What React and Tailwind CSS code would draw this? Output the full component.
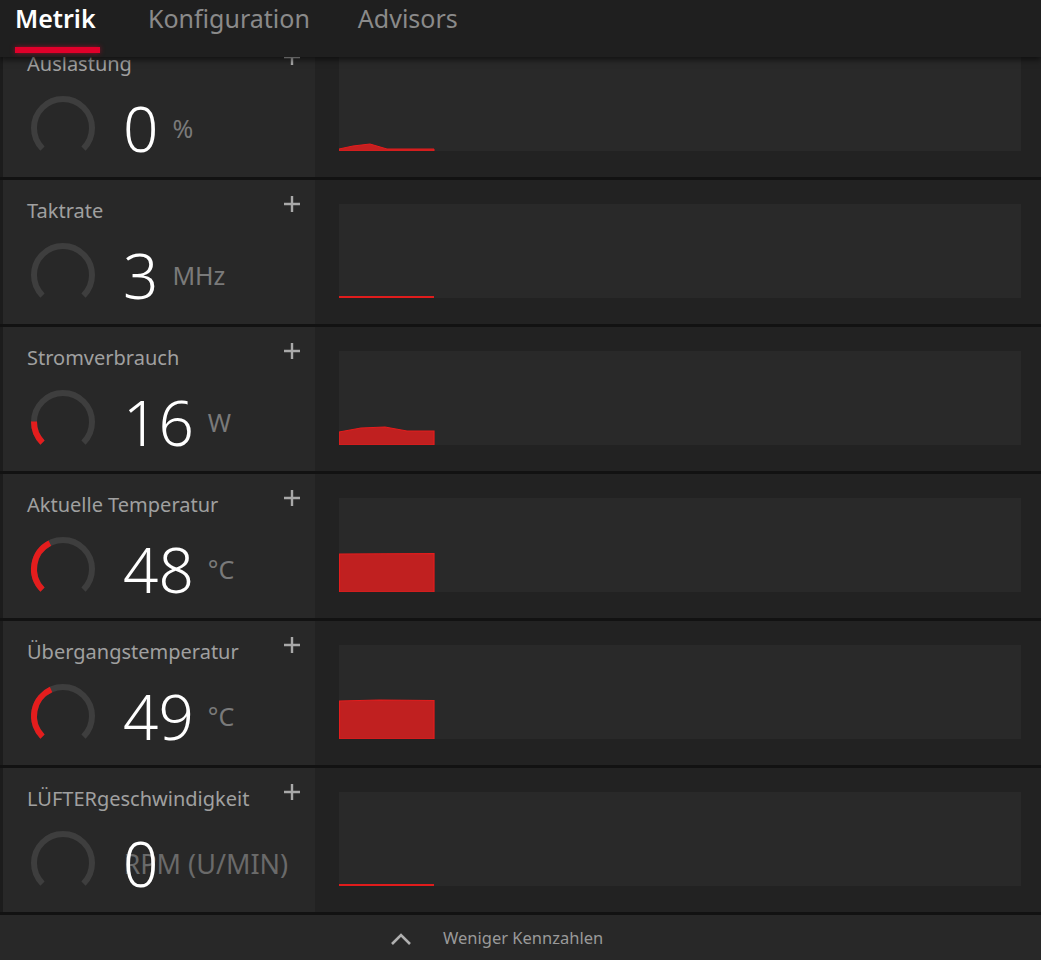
import React from "react";

const FONT = { fontFamily: '"Noto Sans", "Open Sans", sans-serif' };

// Gauge arc: 270° sweep starting bottom-left, going clockwise over the top
function arcPath(cx, cy, r, frac) {
  const start = (135 * Math.PI) / 180;
  const sweep = 270 * frac;
  const end = ((135 + sweep) * Math.PI) / 180;
  const x1 = cx + r * Math.cos(start);
  const y1 = cy + r * Math.sin(start);
  const x2 = cx + r * Math.cos(end);
  const y2 = cy + r * Math.sin(end);
  const large = sweep > 180 ? 1 : 0;
  return `M ${x1.toFixed(2)} ${y1.toFixed(2)} A ${r} ${r} 0 ${large} 1 ${x2.toFixed(2)} ${y2.toFixed(2)}`;
}

function Gauge({ value }) {
  return (
    <svg width="70" height="70" viewBox="0 0 70 70" className="shrink-0">
      <path d={arcPath(35, 35, 29, 1)} fill="none" stroke="#3e3e3e" strokeWidth="6" />
      {value > 0 && (
        <path d={arcPath(35, 35, 29, value)} fill="none" stroke="#e41d1d" strokeWidth="6" />
      )}
    </svg>
  );
}

function Plus() {
  return (
    <svg width="18" height="18" viewBox="0 0 18 18">
      <path d="M9 1v16M1 9h16" stroke="#a9a9a9" strokeWidth="2.4" />
    </svg>
  );
}

// Sparkline area, drawn only over the first ~95px of the history window
function Chart({ shape }) {
  return (
    <div className="h-[94px] w-[682px] bg-[#292929]">
      <svg width="682" height="94" viewBox="0 0 682 94">
        {shape}
      </svg>
    </div>
  );
}

const line = <path d="M0 93 L95 93" stroke="#e01c1c" strokeWidth="2" />;

const rows = [
  {
    label: "Auslastung",
    value: "0",
    unit: "%",
    gauge: 0,
    shape: (
      <path
        d="M0 93 L0 92 L14 89 L31 87 L48 92 L95 92 L95 94 L0 94 Z"
        fill="#c42020"
        stroke="#e41d1d"
        strokeWidth="1"
      />
    ),
  },
  { label: "Taktrate", value: "3", unit: "MHz", gauge: 0, shape: line },
  {
    label: "Stromverbrauch",
    value: "16",
    unit: "W",
    gauge: 0.17,
    shape: (
      <path
        d="M0 94 L0 81 L22 77 L46 76 L68 80 L95 80 L95 94 Z"
        fill="#c02020"
        stroke="#e41d1d"
        strokeWidth="1.2"
      />
    ),
  },
  {
    label: "Aktuelle Temperatur",
    value: "48",
    unit: "°C",
    gauge: 0.4,
    shape: (
      <path
        d="M0.5 94 L0.5 56 L95 55.5 L95 94 Z"
        fill="#c02020"
        stroke="#e41d1d"
        strokeWidth="1.2"
      />
    ),
  },
  {
    label: "Übergangstemperatur",
    value: "49",
    unit: "°C",
    gauge: 0.41,
    shape: (
      <path
        d="M0.5 94 L0.5 56 L40 55 L95 55.5 L95 94 Z"
        fill="#c02020"
        stroke="#e41d1d"
        strokeWidth="1.2"
      />
    ),
  },
  {
    label: "LÜFTERgeschwindigkeit",
    value: "0",
    unit: "RPM (U/MIN)",
    gauge: 0,
    overlap: true,
    shape: line,
  },
];

function MetricRow({ row }) {
  return (
    <div className="flex h-[147px] border-b-[3px] border-[#121212]">
      <div className="w-[3px] shrink-0 bg-[#1c1c1c]" />
      <div className="relative flex w-[312px] shrink-0 flex-col bg-[#282828] pl-[24px] pr-[14px]">
        <div className="flex items-start justify-between pt-[17px]">
          <span className="text-[20px] leading-[28px] text-[#a0a0a0]">{row.label}</span>
          <span className="mt-[-2px]">
            <Plus />
          </span>
        </div>
        <div className="mt-[15px] flex items-center">
          <div className="ml-[1px]">
            <Gauge value={row.gauge} />
          </div>
          {row.overlap ? (
            <div className="ml-[25px] flex items-center">
              <span className="relative z-10 text-[62px] font-light leading-none text-white">{row.value}</span>
              <span className="ml-[-35px] text-[27px] leading-none text-[#6a6a6a]">{row.unit}</span>
            </div>
          ) : (
            <div className="ml-[25px] flex items-center">
              <span className="text-[62px] font-light leading-none text-white">{row.value}</span>
              <span className="ml-[14px] text-[25px] leading-none text-[#7a7a7a]">{row.unit}</span>
            </div>
          )}
        </div>
      </div>
      <div className="flex flex-1 items-start bg-[#222222] pl-[24px] pt-[24px]">
        <Chart shape={row.shape} />
      </div>
    </div>
  );
}

export default function App() {
  return (
    <div className="relative h-[960px] w-[1041px] overflow-hidden bg-[#222222]" style={FONT}>
      <div className="absolute left-0 right-0 top-0 z-20 h-[57px] bg-[#1f1f1f] shadow-[0_3px_6px_rgba(0,0,0,0.55)]">
        <div className="flex items-start gap-[48px] pl-[15px] pt-[0px]">
          <div className="flex flex-col">
            <span className="text-[25px] font-semibold leading-[37px] text-white">Metrik</span>
            <span className="mt-[10px] h-[6px] w-[85px] bg-[#e0002a] shadow-[0_0_5px_rgba(224,0,42,0.6)]" />
          </div>
          <span className="text-[25px] leading-[37px] text-[#8a8a8a]">Konfiguration</span>
          <span className="text-[25px] leading-[37px] text-[#8a8a8a]">Advisors</span>
        </div>
      </div>

      <div className="flex flex-col pt-[33px]">
        {rows.map((r) => (
          <MetricRow key={r.label} row={r} />
        ))}
        <div className="flex h-[47px] items-center bg-[#282828] pl-[390px]">
          <svg width="22" height="14" viewBox="0 0 22 14">
            <path d="M2 12 L11 3 L20 12" fill="none" stroke="#b0b0b0" strokeWidth="2.6" />
          </svg>
          <span className="ml-[31px] text-[16.5px] text-[#9a9a9a]">Weniger Kennzahlen</span>
        </div>
      </div>
    </div>
  );
}
